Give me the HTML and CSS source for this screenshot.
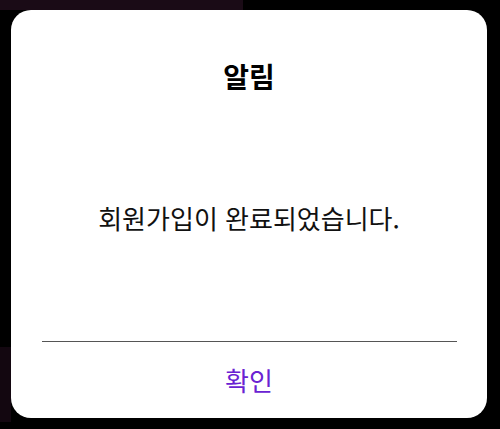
FILE: index.html
```html
<!DOCTYPE html>
<html lang="ko">
<head>
<meta charset="utf-8">
<link rel="stylesheet" href="styles.css">
</head>
<body>
<div class="backdrop">
  <div class="dialog">
    <h1 class="title">알림</h1>
    <p class="message">회원가입이 완료되었습니다.</p>
    <div class="divider"></div>
    <button class="confirm">확인</button>
  </div>
</div>
</body>
</html>
```
FILE: styles.css
```css
html, body {
  margin: 0;
  padding: 0;
}
body {
  width: 500px;
  height: 429px;
  overflow: hidden;
  background:
    linear-gradient(#1a0b16, #1a0b16) 0 0 / 243px 10px no-repeat,
    linear-gradient(#130710, #130710) 0 347px / 11px 75px no-repeat,
    #000;
  font-family: "Noto Sans CJK KR", "Noto Sans", sans-serif;
}
.backdrop {
  padding: 10px 13px 0 11px;
}
.dialog {
  width: 476px;
  height: 408px;
  background: #fff;
  border-radius: 20px;
  display: flex;
  flex-direction: column;
  align-items: stretch;
  overflow: hidden;
}
.title {
  margin: 48px 0 0;
  font-size: 28px;
  font-weight: 700;
  line-height: 36px;
  text-align: center;
  color: #000;
}
.message {
  margin: 107px 0 0;
  font-size: 26px;
  font-weight: 400;
  line-height: 34px;
  text-align: center;
  color: #111;
}
.divider {
  margin: 106px 30px 0 31px;
  height: 1px;
  background: #555;
}
.confirm {
  flex: 1;
  border: none;
  background: transparent;
  font-family: inherit;
  font-size: 26px;
  color: #6a22d2;
  padding: 0 0 2px;
  cursor: pointer;
}
```
